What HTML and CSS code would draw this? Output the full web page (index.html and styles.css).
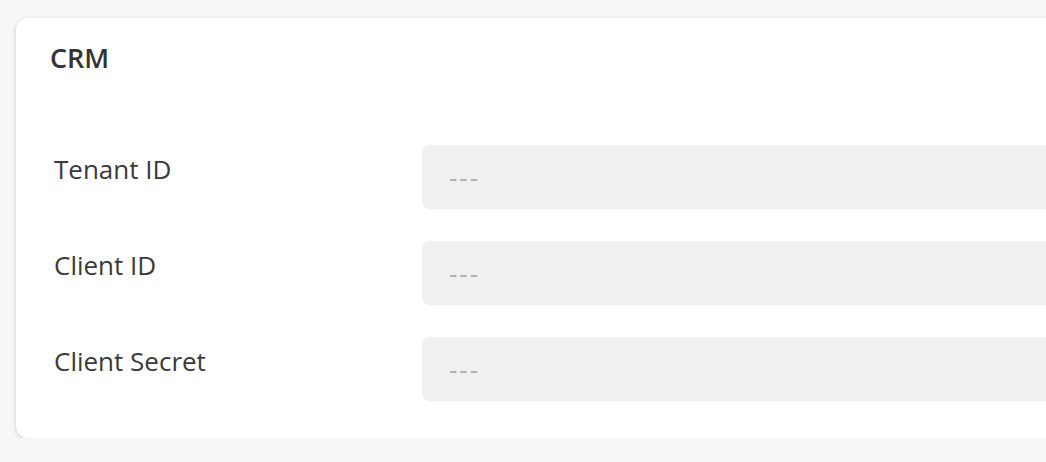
FILE: index.html
```html
<!DOCTYPE html>
<html lang="en">
<head>
  <meta charset="UTF-8" />
  <meta name="viewport" content="width=device-width, initial-scale=1" />
  <title>CRM Settings</title>
  <link rel="stylesheet" href="styles.css">
</head>
<body>
  <div class="card">
    <h2 class="card-title">CRM</h2>

    <div class="form">
      <label class="field-label" for="tenantId">Tenant ID</label>
      <input class="field-input" id="tenantId" type="text" placeholder="---" />

      <label class="field-label" for="clientId">Client ID</label>
      <input class="field-input" id="clientId" type="text" placeholder="---" />

      <label class="field-label" for="clientSecret">Client Secret</label>
      <input class="field-input" id="clientSecret" type="text" placeholder="---" />
    </div>
  </div>
</body>
</html>
```

FILE: styles.css
```css
body {
  margin: 0;
  padding: 18px 0 0 16px;
  font-family: 'Open Sans', 'Noto Sans', sans-serif;
  background-color: #f7f7f7;
  color: #333;
  overflow: hidden;
}
.card {
  width: 1100px;
  height: 420px;
  box-sizing: border-box;
  background-color: #fff;
  border-radius: 12px;
  box-shadow: 0 1px 4px rgba(0, 0, 0, 0.18);
  padding: 30px 34px;
}
.card-title {
  margin: 0;
  font-size: 27px;
  font-weight: 600;
  line-height: 20px;
  color: #333;
}
.form {
  margin-top: 77px;
  display: grid;
  grid-template-columns: 372px 1fr;
  row-gap: 32px;
  align-items: start;
}
.field-label {
  padding-left: 4px;
  font-size: 26px;
  line-height: 48px;
  color: #3a3a3a;
}
.field-input {
  height: 64px;
  box-sizing: border-box;
  border: none;
  border-radius: 8px;
  background-color: #f0f0f0;
  padding: 0 27px;
  font-family: inherit;
  font-size: 26px;
  letter-spacing: 2px;
  outline: none;
}
.field-input::placeholder {
  color: #b0b0b0;
}
```
